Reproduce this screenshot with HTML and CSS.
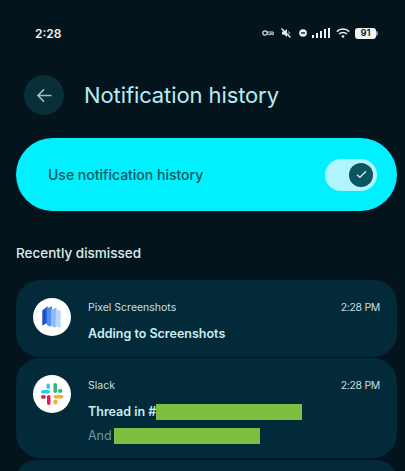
FILE: index.html
```html
<!DOCTYPE html>
<html lang="en">
<head>
<meta charset="utf-8">
<title>Notification history</title>
<link rel="stylesheet" href="styles.css">
</head>
<body>
<div class="screen">
  <div class="status">
    <span class="clock">2:28</span>
    <div class="status-icons">
      <svg class="ic-key" viewBox="0 0 12 8" width="12" height="8"><circle cx="3" cy="4" r="2.2" fill="none" stroke="#d8e4e6" stroke-width="1.2"/><path d="M5.2 3h6v2.6h-1.4v-1H8.400v1H7V5H5.200" fill="none" stroke="#d8e4e6" stroke-width="1"/></svg>
      <svg class="ic-mute" viewBox="0 0 12 12" width="12" height="12"><path d="M2 4.500h2L7 2v8L4 7.500H2z" fill="#e6eeee"/><path d="M8.500 4.500c1 1 1 2 0 3" stroke="#e6eeee" fill="none"/><path d="M1.500 1.500l9 9" stroke="#e6eeee" stroke-width="1.4"/></svg>
      <svg class="ic-dnd" viewBox="0 0 8 8" width="8" height="8"><circle cx="4" cy="4" r="3.800" fill="#f0f4f4"/><rect x="2" y="3.300" width="4" height="1.400" fill="#04141c"/></svg>
      <svg class="ic-signal" viewBox="0 0 19 10" width="19" height="10"><g fill="#f0f4f4"><rect x="0" y="7" width="2" height="3"/><rect x="4" y="5" width="2" height="5"/><rect x="8" y="3" width="2" height="7"/><rect x="12" y="1" width="2" height="9"/><rect x="16" y="0" width="2" height="10"/></g></svg>
      <svg class="ic-wifi" viewBox="0 0 14 11" width="14" height="11"><g fill="none" stroke="#f0f4f4" stroke-width="1.500"><path d="M.8 3.600a9 9 0 0 1 12.400 0"/><path d="M3 6a5.800 5.800 0 0 1 8 0"/></g><path d="M5.300 8a2.500 2.500 0 0 1 3.400 0L7 10.200z" fill="#f0f4f4"/></svg>
      <span class="battery-wrap"><span class="battery"><span class="battery-num">91</span></span><span class="battery-nub"></span></span>
    </div>
  </div>

  <header class="top">
    <span class="back">
      <svg viewBox="0 0 18 16" width="17" height="15"><path d="M16.500 8H2M8.500 1.500L2 8l6.500 6.500" fill="none" stroke="#8fc4cc" stroke-width="1.700"/></svg>
    </span>
    <h1 class="title">Notification history</h1>
  </header>

  <section class="master">
    <span class="master-label">Use notification history</span>
    <span class="switch">
      <span class="thumb">
        <svg viewBox="0 0 12 10" width="11" height="9"><path d="M1 5.200l3.200 3L11 1.300" fill="none" stroke="#d8f4f6" stroke-width="1.500"/></svg>
      </span>
    </span>
  </section>

  <h2 class="section-title">Recently dismissed</h2>

  <div class="list">
    <article class="card card-a">
      <span class="avatar">
        <svg viewBox="0 0 24 24" width="26" height="26">
          <path d="M3 6l5-4v15l-5 3z" fill="#1a56c8"/>
          <path d="M7 4l5-2 1 16-3 3-3-2z" fill="#4f8df0"/>
          <path d="M11 6l5-3 1 15-2 4-4-2z" fill="#8fbcf8"/>
          <path d="M16 5l4 1v14l1 2-5-1-1-2z" fill="#bcd6fb"/>
        </svg>
      </span>
      <div class="body">
        <div class="meta"><span>Pixel Screenshots</span><span class="when">2:28 PM</span></div>
        <div class="headline">Adding to Screenshots</div>
      </div>
    </article>
    <article class="card card-b">
      <span class="avatar">
        <svg viewBox="0 0 24 24" width="24" height="24">
          <g fill="#36c5f0"><rect x="1" y="8" width="9" height="3.500" rx="1.750"/><rect x="6.500" y="1.500" width="3.500" height="5.500" rx="1.750"/></g>
          <g fill="#2eb67d"><rect x="13.500" y="1" width="3.500" height="10" rx="1.750"/><rect x="18" y="7" width="4.500" height="3.800" rx="1.900"/></g>
          <g fill="#ecb22e"><rect x="13.500" y="13" width="10" height="3.500" rx="1.750"/><rect x="13.500" y="17.500" width="4" height="5" rx="1.750"/></g>
          <g fill="#e01e5a"><rect x="7" y="13" width="3.500" height="10" rx="1.750"/><rect x="1" y="13" width="4.800" height="3.800" rx="1.900"/></g>
        </svg>
      </span>
      <div class="body">
        <div class="meta"><span>Slack</span><span class="when">2:28 PM</span></div>
        <div class="headline"><span>Thread in #</span><span class="redact redact-a"></span></div>
        <div class="detail"><span>And</span><span class="redact redact-b"></span></div>
      </div>
    </article>
    <article class="card card-c"></article>
  </div>
</div>
</body>
</html>
```
FILE: styles.css
```css
* { box-sizing: border-box; }
html, body { margin: 0; padding: 0; }
body { background: #04141c; font-family: "Inter", "Noto Sans", sans-serif; }
.screen { width: 405px; height: 471px; overflow: hidden; display: flex; flex-direction: column; background: #04141c; }
.screen > * { flex: none; }

.status { display: flex; justify-content: space-between; align-items: center; height: 18px; margin-top: 24px; padding: 0 27px 0 35px; }
.clock { font-size: 12px; font-weight: 600; color: #eef3f3; }
.status-icons { display: flex; align-items: center; gap: 5px; }
.ic-key { margin-right: 1px; }
.ic-mute { margin-right: 2px; }
.battery-wrap { display: flex; align-items: center; }
.battery { width: 21px; height: 11px; border-radius: 3px; background: #f0f4f4; display: flex; align-items: center; justify-content: center; }
.battery-nub { width: 2px; height: 5px; border-radius: 0 2px 2px 0; background: #8a9a9e; }
.battery-num { font-size: 9.500px; font-weight: 600; color: #04141c; line-height: 1; }

.top { display: flex; align-items: center; gap: 20px; margin: 33px 0 0 24px; height: 40px; }
.back { width: 40px; height: 40px; border-radius: 50%; background: #082e38; display: flex; align-items: center; justify-content: center; flex: none; }
.title { margin: 0; font-size: 22px; font-weight: 400; color: #b4ecf6; letter-spacing: -0.1px; }

.master { display: flex; align-items: center; justify-content: space-between; height: 73px; margin: 23px 8px 0 16px; padding: 0 20px 0 32px; border-radius: 37px; background: #00f0ff; }
.master-label { font-size: 14px; font-weight: 500; color: #0b5660; }
.switch { width: 52px; height: 32px; border-radius: 16px; background: #b0f4fc; display: flex; align-items: center; justify-content: flex-end; padding-right: 4px; }
.thumb { width: 24px; height: 24px; border-radius: 50%; background: #0a5560; display: flex; align-items: center; justify-content: center; }

.section-title { margin: 33px 0 0 16px; font-size: 13.500px; font-weight: 500; line-height: 18px; color: #d6eef2; }

.list { display: flex; flex-direction: column; gap: 1px; margin: 18px 8px 0 16px; }
.card { display: flex; gap: 17px; padding: 18px 17px 0 17px; background: #032a38; border-radius: 24px; flex: none; }
.card-a { height: 77px; }
.card-b { height: 100px; padding-top: 17px; }
.card-c { height: 40px; margin-top: 1px; }
.avatar { width: 38px; height: 38px; border-radius: 50%; background: #fff; display: flex; align-items: center; justify-content: center; flex: none; }
.body { flex: 1; min-width: 0; }
.meta { display: flex; justify-content: space-between; font-size: 10.500px; line-height: 14px; margin-top: 3px; color: #c4dfe4; }
.card-b .meta { margin-top: 4px; }
.when { letter-spacing: -0.3px; }
.headline { display: flex; align-items: center; margin-top: 11px; font-size: 12.500px; font-weight: 600; line-height: 16px; color: #c8eef4; }
.detail { display: flex; align-items: center; margin-top: 8px; font-size: 12.500px; line-height: 16px; color: #6d9aa4; }
.redact { display: block; height: 16px; background: #7abf3e; }
.redact-a { width: 146px; }
.redact-b { width: 146px; margin-left: 2px; }
```
